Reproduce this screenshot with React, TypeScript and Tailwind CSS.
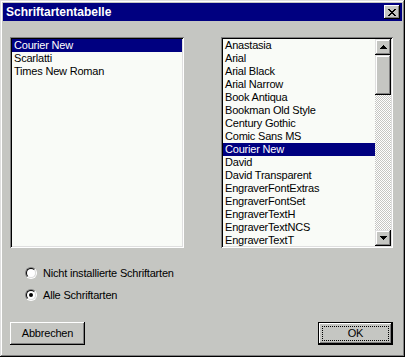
import React from 'react'

const installed = ['Courier New', 'Scarlatti', 'Times New Roman']

const available = [
  'Anastasia',
  'Arial',
  'Arial Black',
  'Arial Narrow',
  'Book Antiqua',
  'Bookman Old Style',
  'Century Gothic',
  'Comic Sans MS',
  'Courier New',
  'David',
  'David Transparent',
  'EngraverFontExtras',
  'EngraverFontSet',
  'EngraverTextH',
  'EngraverTextNCS',
  'EngraverTextT',
]

const sunken =
  'shadow-[inset_1px_1px_#808080,inset_-1px_-1px_#fff,inset_2px_2px_#000,inset_-2px_-2px_#dfdfdf]'
const raised =
  'shadow-[inset_-1px_-1px_#000,inset_1px_1px_#fff,inset_-2px_-2px_#808080,inset_2px_2px_#c5c6c2]'
const raisedBar =
  'shadow-[inset_-1px_-1px_#000,inset_1px_1px_#dfdfdf,inset_-2px_-2px_#808080,inset_2px_2px_#fff]'

function Row({ label, selected }: { label: string; selected?: boolean }) {
  return (
    <div
      className={`h-[13px] leading-[13px] pl-[2px] whitespace-nowrap ${
        selected ? 'bg-[#000080] text-white' : 'text-black'
      }`}
    >
      {label}
    </div>
  )
}

function Arrow({ up }: { up?: boolean }) {
  return (
    <div className={`w-4 h-4 bg-[#c5c6c2] flex items-center justify-center ${raisedBar}`}>
      <svg width="7" height="4" viewBox="0 0 7 4" shapeRendering="crispEdges">
        {up ? <path d="M3 0h1v1h1v1h1v1h1v1H0V3h1V2h1V1h1z" fill="#000" /> : <path d="M0 0h7v1H6v1H5v1H4v1H3V3H2V2H1V1H0z" fill="#000" />}
      </svg>
    </div>
  )
}

function Radio({ label, checked }: { label: string; checked?: boolean }) {
  return (
    <div className="flex items-center h-[12px] pl-[15px] gap-[6px]">
      <div className="w-3 h-3 rounded-full border border-t-[#808080] border-l-[#808080] border-b-white border-r-white">
        <div className="w-full h-full rounded-full border border-t-black border-l-black border-b-[#dfdfdf] border-r-[#dfdfdf] bg-white flex items-center justify-center">
          {checked && <div className="w-1 h-1 rounded-full bg-black" />}
        </div>
      </div>
      <span className="leading-[12px]">{label}</span>
    </div>
  )
}

export default function App() {
  return (
    <div
      className="w-[405px] h-[357px] bg-[#c5c6c2] p-[3px] flex flex-col text-[11px] tracking-[-0.2px] text-black shadow-[inset_-1px_-1px_#000,inset_1px_1px_#dfdfdf,inset_-2px_-2px_#808080,inset_2px_2px_#fff]"
      style={{ fontFamily: '"Liberation Sans", Arial, sans-serif' }}
    >
      {/* Title bar */}
      <div className="h-[18px] bg-[#000080] flex items-center justify-between pl-[3px] pr-[2px]">
        <span className="text-white font-bold text-[12px] tracking-normal leading-none">
          Schriftartentabelle
        </span>
        <div className={`w-4 h-[14px] bg-[#c5c6c2] flex items-center justify-center ${raised}`}>
          <svg width="8" height="7" viewBox="0 0 8 7" shapeRendering="crispEdges">
            <path
              d="M0 0h2v1h1v1h2V1h1V0h2v1H7v1H6v1H5v1h1v1h1v1h1v1H6V6H5V5H3v1H2v1H0V6h1V5h1V4h1V3H2V2H1V1H0z"
              fill="#000"
            />
          </svg>
        </div>
      </div>

      {/* Body */}
      <div className="flex-1 flex flex-col pl-[7px] pr-[9px] pt-[16px]">
        <div className="flex justify-between">
          <div className={`w-[174px] h-[211px] bg-[#f9fbf7] p-[2px] ${sunken}`}>
            {installed.map((f, i) => (
              <Row key={f} label={f} selected={i === 0} />
            ))}
          </div>

          <div className={`w-[172px] h-[211px] bg-[#f9fbf7] p-[2px] flex ${sunken}`}>
            <div className="flex-1 overflow-hidden">
              {available.map((f) => (
                <Row key={f} label={f} selected={f === 'Courier New'} />
              ))}
            </div>
            <div className="w-4 flex flex-col">
              <Arrow up />
              <div className={`h-[40px] bg-[#c5c6c2] ${raisedBar}`} />
              <div className="flex-1 [background-image:conic-gradient(#fff_25%,#c5c6c2_0_50%,#fff_0_75%,#c5c6c2_0)] [background-size:2px_2px]" />
              <Arrow />
            </div>
          </div>
        </div>

        <div className="mt-[19px]">
          <Radio label="Nicht installierte Schriftarten" />
        </div>
        <div className="mt-[10px]">
          <Radio label="Alle Schriftarten" checked />
        </div>

        <div className="mt-[21px] flex justify-between">
          <button className={`w-[75px] h-[23px] bg-[#c5c6c2] ${raised}`}>Abbrechen</button>
          <button className="w-[75px] h-[23px] border border-black bg-[#c5c6c2]">
            <div className={`w-full h-full p-[3px] ${raised}`}>
              <div className="w-full h-full border border-dotted border-black flex items-center justify-center">
                OK
              </div>
            </div>
          </button>
        </div>
      </div>
    </div>
  )
}
